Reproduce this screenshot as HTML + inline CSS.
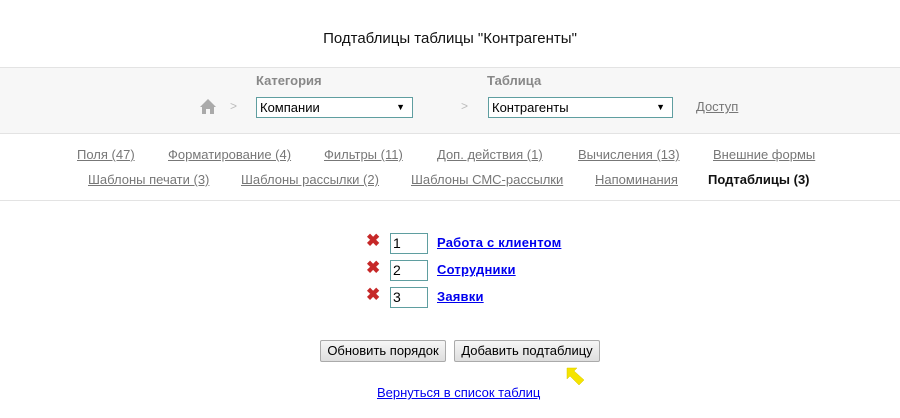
<!DOCTYPE html>
<html><head><meta charset="utf-8"><style>
body{margin:0;width:900px;height:418px;background:#fff;font-family:"Liberation Sans",Arial,sans-serif;position:relative;overflow:hidden}
.a{position:absolute;white-space:nowrap}
.t{color:#777;font-size:13px;text-decoration:underline}
.sel{position:absolute;border:1px solid #5f9ea0;background:#fff;font-size:13px;line-height:19px;padding-left:3px;box-sizing:border-box;height:21px}
.sel span{position:absolute;right:7px;top:0;font-size:9px}
.inp{position:absolute;left:390px;width:38px;height:21px;border:1px solid #5f9ea0;box-sizing:border-box;font-size:14px;line-height:19px;padding-left:2px}
.x{position:absolute;left:366px;font-size:17px;color:#c62828;font-weight:bold}
.lnk{position:absolute;left:437px;font-size:13px;font-weight:bold;color:#0000ee;text-decoration:underline;letter-spacing:0.2px}
.btn{position:absolute;top:340px;height:22px;border:1px solid #aaa;border-radius:2px;background:linear-gradient(#f6f6f6,#dedede);font-size:13px;line-height:20px;text-align:center;box-sizing:border-box}
</style></head><body>
<div class="a" style="left:0;width:900px;top:30px;text-align:center;font-size:15px;color:#111">Подтаблицы таблицы "Контрагенты"</div>
<div class="a" style="left:0;top:67px;width:900px;height:65px;background:#f7f7f7;border-top:1px solid #e3e3e3;border-bottom:1px solid #e3e3e3"></div>
<svg class="a" style="left:200px;top:99px" width="16" height="15" viewBox="0 0 16 15"><path d="M8 0L0 8h2v7h4v-5h4v5h4V8h2z" fill="#aaa"/></svg>
<div class="a" style="left:230px;top:99px;color:#bbb;font-size:12px">&gt;</div>
<div class="a" style="left:461px;top:99px;color:#bbb;font-size:12px">&gt;</div>
<div class="a" style="left:256px;top:73px;font-size:13px;font-weight:bold;color:#888">Категория</div>
<div class="a" style="left:487px;top:73px;font-size:13px;font-weight:bold;color:#888">Таблица</div>
<div class="sel" style="left:256px;top:97px;width:157px">Компании<span>▼</span></div>
<div class="sel" style="left:488px;top:97px;width:185px">Контрагенты<span>▼</span></div>
<div class="a t" style="left:696px;top:99px">Доступ</div>
<div class="a t" style="left:77px;top:147px">Поля (47)</div>
<div class="a t" style="left:168px;top:147px">Форматирование (4)</div>
<div class="a t" style="left:324px;top:147px">Фильтры (11)</div>
<div class="a t" style="left:437px;top:147px">Доп. действия (1)</div>
<div class="a t" style="left:578px;top:147px">Вычисления (13)</div>
<div class="a t" style="left:713px;top:147px">Внешние формы</div>
<div class="a t" style="left:88px;top:172px">Шаблоны печати (3)</div>
<div class="a t" style="left:241px;top:172px">Шаблоны рассылки (2)</div>
<div class="a t" style="left:411px;top:172px">Шаблоны СМС-рассылки</div>
<div class="a t" style="left:595px;top:172px">Напоминания</div>
<div class="a" style="left:708px;top:172px;font-size:13px;font-weight:bold;color:#111">Подтаблицы (3)</div>
<div class="a" style="left:0;top:200px;width:900px;border-top:1px solid #e3e3e3"></div>
<div class="x" style="top:231px">✖</div><div class="inp" style="top:233px">1</div><div class="lnk" style="top:235px">Работа с клиентом</div>
<div class="x" style="top:258px">✖</div><div class="inp" style="top:260px">2</div><div class="lnk" style="top:262px">Сотрудники</div>
<div class="x" style="top:285px">✖</div><div class="inp" style="top:287px">3</div><div class="lnk" style="top:289px">Заявки</div>
<div class="btn" style="left:320px;width:126px">Обновить порядок</div>
<div class="btn" style="left:454px;width:146px">Добавить подтаблицу</div>
<svg class="a" style="left:565px;top:366px" width="22" height="22" viewBox="0 0 22 22"><path d="M2 2h10l-3 3 10 9-5 5-9-9-3 3z" fill="#f5e400" stroke="#d8c800" stroke-width="0.5"/></svg>
<div class="a" style="left:377px;top:385px;font-size:13px;color:#0000ee;text-decoration:underline">Вернуться в список таблиц</div>
</body></html>
